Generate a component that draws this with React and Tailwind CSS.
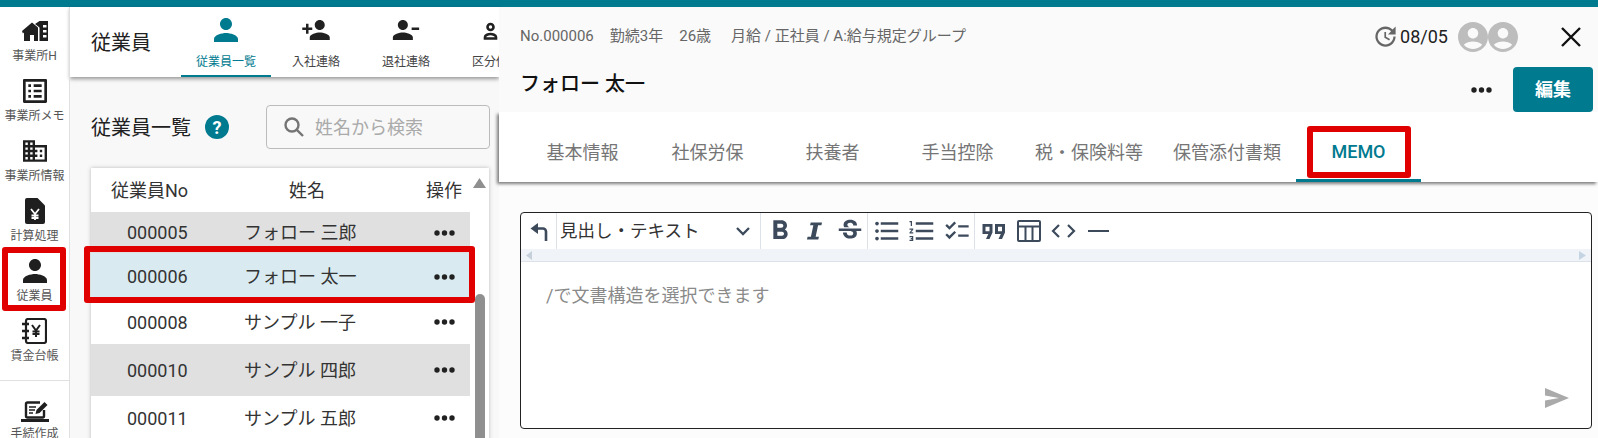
import React from 'react'

const PERSON = 'M12 12c2.21 0 4-1.79 4-4s-1.79-4-4-4-4 1.79-4 4 1.79 4 4 4zm0 2c-2.67 0-8 1.34-8 4v2h16v-2c0-2.66-5.33-4-8-4z'
const font = { fontFamily: 'Roboto, "Noto Sans CJK JP", sans-serif' }

const Mui = ({ d, size = 24, className = '', viewBox = '0 0 24 24', w, h }) => (
  <svg width={w || size} height={h || size} viewBox={viewBox} fill="currentColor" className={className}><path d={d} /></svg>
)

const HomeIcon = () => (
  <svg width="26" height="20" viewBox="0 0 26 20" fill="#1f1f1f">
    <path d="M0 10 10 1.500 16 6.600V20h-4v-6H8v6H2v-8.400L.9 12.400z" />
    <path fillRule="evenodd" d="M13 3 17.500 0H26v20h-8.500V6.500zM21 4v2.500h3.500V4zM21 9v2.500h3.500V9zM21 14v2.500h3.500V14z" />
  </svg>
)
const DocYen = () => (
  <svg width="20" height="26" viewBox="0 0 20 26">
    <path d="M2 0h10.500L20 7.500V24a2 2 0 0 1-2 2H2a2 2 0 0 1-2-2V2a2 2 0 0 1 2-2z" fill="#1f1f1f" />
    <path d="M6 11l4 5 4-5M10 16v6M6.500 17.500h7M6.500 20h7" fill="none" stroke="#fff" strokeWidth="1.800" />
  </svg>
)
const Ledger = () => (
  <svg width="25" height="26" viewBox="0 0 25 26" fill="none" stroke="#1f1f1f">
    <rect x="4" y="1" width="20" height="24" rx="2" strokeWidth="2.200" />
    <path d="M0 6h7M0 13h7M0 20h7" strokeWidth="2.400" />
    <path d="M10 7l4 5.500L18 7M14 12.500V19M10.500 13.500h7M10.500 16h7" strokeWidth="2" />
  </svg>
)
const Laptop = () => (
  <svg width="28" height="22" viewBox="0 0 28 22" fill="none" stroke="#1f1f1f">
    <path d="M23 10v6a1.500 1.500 0 0 1-1.500 1.500h-15A1.500 1.500 0 0 1 5 16V4a1.500 1.500 0 0 1 1.500-1.500H19" strokeWidth="2.400" />
    <path d="M8 7h7M8 10h6M8 13h4" strokeWidth="1.500" />
    <path d="M14.500 14l1-4 8-8 3 3-8 8z" fill="#1f1f1f" stroke="none" />
    <path d="M0 20.500h28" strokeWidth="3" />
  </svg>
)

const nav = [
  { label: '事業所H', icon: <HomeIcon /> },
  { label: '事業所メモ', icon: <Mui d="M19 5v14H5V5h14m1.100-2H3.900c-.5 0-.9.4-.9.9v16.200c0 .4.4.9.9.9h16.200c.4 0 .9-.5.9-.9V3.900c0-.5-.5-.9-.9-.9zM11 7h6v2h-6V7zm0 4h6v2h-6v-2zm0 4h6v2h-6zM7 7h2v2H7zm0 4h2v2H7zm0 4h2v2H7z" viewBox="3 3 18 18" className="text-[#1f1f1f]" /> },
  { label: '事業所情報', icon: <Mui d="M12 7V3H2v18h20V7H12zM6 19H4v-2h2v2zm0-4H4v-2h2v2zm0-4H4V9h2v2zm0-4H4V5h2v2zm4 12H8v-2h2v2zm0-4H8v-2h2v2zm0-4H8V9h2v2zm0-4H8V5h2v2zm10 12h-8v-2h2v-2h-2v-2h2v-2h-2V9h8v10zm-2-8h-2v2h2v-2zm0 4h-2v2h2v-2z" viewBox="2 3 20 18" w={24} h={22} className="text-[#1f1f1f]" /> },
  { label: '計算処理', icon: <DocYen /> },
  { label: '従業員', icon: <Mui d={PERSON} viewBox="4 4 16 16" className="text-[#1f1f1f]" /> },
  { label: '賃金台帳', icon: <Ledger /> },
]

const rows = [
  { no: '000005', name: 'フォロー 三郎', h: 'h-[41px]', bg: 'bg-[#e0e0e0]' },
  { no: '000006', name: 'フォロー 太一', h: 'h-[47px]', bg: 'bg-[#d9ebf0]' },
  { no: '000008', name: 'サンプル 一子', h: 'h-[44px]', bg: 'bg-white' },
  { no: '000010', name: 'サンプル 四郎', h: 'h-[52px]', bg: 'bg-[#e0e0e0]' },
  { no: '000011', name: 'サンプル 五郎', h: 'h-[44px]', bg: 'bg-white' },
]

const Dots = ({ className = '' }) => (
  <svg width="21" height="6" viewBox="0 0 21 6" fill="#212121" className={className}>
    <circle cx="3" cy="3" r="2.700" /><circle cx="10.500" cy="3" r="2.700" /><circle cx="18" cy="3" r="2.700" />
  </svg>
)

const Avatar = ({ className = '' }) => (
  <Mui size={30} viewBox="2 2 20 20" className={'text-[#bdbdbd] ' + className} d="M12 2C6.480 2 2 6.480 2 12s4.480 10 10 10 10-4.480 10-10S17.520 2 12 2zm0 4c1.930 0 3.500 1.570 3.500 3.500S13.930 13 12 13s-3.500-1.570-3.500-3.500S10.070 6 12 6zm0 14c-2.030 0-4.430-.82-6.140-2.880C7.550 15.800 9.680 15 12 15s4.450.8 6.140 2.120C16.430 19.180 14.030 20 12 20z" />
)

const Tool = ({ children }) => <div className="w-[35px] h-full flex items-center justify-center shrink-0">{children}</div>

export default function App() {
  return (
    <div style={font} className="w-[1598px] h-[438px] overflow-hidden flex flex-col bg-white text-[#212121]">
      <div className="h-[7px] bg-[#007a8f] shrink-0" />
      <div className="flex flex-1 min-h-0">
        {/* side nav */}
        <aside className="relative w-[70px] shrink-0 border-r border-[#e0e0e0] pt-[7px]">
          {nav.map(n => (
            <div key={n.label} className="h-[60px] flex flex-col items-center">
              <div className="mt-[5px] h-[24px] flex items-center justify-center">{n.icon}</div>
              <div className="mt-[5px] text-[12px] leading-4 text-[#555] whitespace-nowrap">{n.label}</div>
            </div>
          ))}
          <div className="mt-[6px] border-t border-[#e0e0e0]" />
          <div className="h-[60px] flex flex-col items-center">
            <div className="mt-[19px] h-[22px] flex items-center justify-center"><Laptop /></div>
            <div className="mt-[4px] text-[12px] leading-4 text-[#555] whitespace-nowrap">手続作成</div>
          </div>
          <div className="absolute left-[2px] top-[240px] w-[64px] h-[64px] border-[6px] border-[#e00000] rounded-[3px]" />
        </aside>

        {/* employee list */}
        <div className="w-[429px] shrink-0 bg-[#f8f8f8] flex flex-col">
          <header className="h-[70px] shrink-0 bg-white shadow-[0_2px_4px_rgba(0,0,0,0.4)] flex pl-[21px] overflow-hidden">
            <div className="w-[90px] shrink-0 pt-[24px] text-[20px] leading-6">従業員</div>
            <div className="w-[90px] shrink-0 h-full flex flex-col items-center pt-[11px] border-b-2 border-[#007a8f] text-[#007a8f]">
              <Mui d={PERSON} viewBox="4 4 16 16" />
              <div className="mt-[12px] text-[12px] leading-4">従業員一覧</div>
            </div>
            <div className="w-[90px] shrink-0 flex flex-col items-center pt-[11px]">
              <div className="h-6 flex items-center"><Mui w={28} h={20} viewBox="1 4 22 16" d="M15 12c2.210 0 4-1.790 4-4s-1.790-4-4-4-4 1.790-4 4 1.790 4 4 4zm-9-2V7H4v3H1v2h3v3h2v-3h3v-2H6zm9 4c-2.670 0-8 1.340-8 4v2h16v-2c0-2.660-5.330-4-8-4z" /></div>
              <div className="mt-[12px] text-[12px] leading-4 text-[#444]">入社連絡</div>
            </div>
            <div className="w-[90px] shrink-0 flex flex-col items-center pt-[11px]">
              <div className="h-6 flex items-center"><Mui w={28} h={20} viewBox="2 4 21 16" d="M14 8c0-2.210-1.790-4-4-4S6 5.790 6 8s1.790 4 4 4 4-1.790 4-4zm3 2v2h6v-2h-6zM2 18v2h16v-2c0-2.660-5.330-4-8-4s-8 1.340-8 4z" /></div>
              <div className="mt-[12px] text-[12px] leading-4 text-[#444]">退社連絡</div>
            </div>
            <div className="w-[90px] shrink-0 flex flex-col items-center pt-[11px]">
              <div className="h-6 flex items-center">
                <svg width="28" height="20" viewBox="0 0 28 20" fill="none" stroke="#212121" strokeWidth="2.600">
                  <circle cx="8.500" cy="7" r="3" /><path d="M3 18.500v-1.500c0-2 3.500-3 5.500-3s5.500 1 5.500 3v1.500zM17 4h9M17 9h9M17 14h9" />
                </svg>
              </div>
              <div className="mt-[12px] text-[12px] leading-4 text-[#444] whitespace-nowrap">区分他等</div>
            </div>
          </header>

          <div className="flex items-center pl-[21px] mt-[28px] h-[44px] shrink-0">
            <div className="text-[20px] w-[114px] pt-[2px]">従業員一覧</div>
            <div className="w-[24px] h-[24px] rounded-full bg-[#007a8f] text-white text-[18px] font-bold flex items-center justify-center">?</div>
            <div className="ml-[37px] w-[224px] h-[44px] border border-[#bbb] rounded-[4px] flex items-center pl-[16px]">
              <svg width="22" height="22" viewBox="0 0 22 22" fill="none" stroke="#757575" strokeWidth="2.400"><circle cx="9" cy="9" r="6.500" /><path d="M13.800 13.800 20 20" /></svg>
              <span className="ml-[10px] text-[18px] text-[#aaa]">姓名から検索</span>
            </div>
          </div>

          <div className="relative ml-[21px] mt-[19px] w-[398px] bg-white shadow-[0_0_4px_rgba(0,0,0,0.25)] flex shrink-0">
            <div className="w-[379px] shrink-0">
              <div className="h-[44px] flex items-center text-[18px] text-[#333]">
                <div className="w-[198px] pl-[20px]">従業員No</div>
                <div className="w-[137px]">姓名</div>
                <div>操作</div>
              </div>
              {rows.map(r => (
                <div key={r.no} className={'flex items-center text-[18px] text-[#333] ' + r.h + ' ' + r.bg}>
                  <div className="w-[153px] pl-[36px]">{r.no}</div>
                  <div className="w-[190px] whitespace-nowrap">{r.name}</div>
                  <Dots />
                </div>
              ))}
            </div>
            <div className="flex-1 flex flex-col items-center">
              <svg width="13" height="10" viewBox="0 0 13 10" fill="#8f8f8f" className="mt-[10px]"><path d="M6.500 0 13 10H0z" /></svg>
              <div className="mt-[106px] w-[10px] h-[200px] bg-[#8f8f8f] rounded-t-[5px]" />
            </div>
            <div className="absolute left-[-7px] top-[78px] w-[391px] h-[57px] border-[6px] border-[#e00000] rounded-[3px]" />
          </div>
        </div>

        {/* detail drawer */}
        <div className="relative flex-1 flex flex-col bg-[#fcfcfc]">
          <div className="relative z-20 h-[105px] shrink-0 bg-[#fafafa] pl-[21px]">
            <div className="h-[56px] flex items-center">
              <div className="flex gap-4 text-[15px] text-[#666] pt-[2px]">
                <span>No.000006</span>
                <span>勤続3年</span>
                <span>26歳</span>
                <span className="ml-[4px]">月給 / 正社員 / A:給与規定グループ</span>
              </div>
              <div className="ml-auto mt-[3px] flex items-center">
                <Mui size={27} className="text-[#666]" d="M21 10.120h-6.780l2.740-2.820c-2.730-2.700-7.150-2.800-9.880-.1-2.730 2.710-2.730 7.080 0 9.790s7.150 2.710 9.880 0C18.320 15.650 19 14.080 19 12.100h2c0 1.980-.88 4.550-2.640 6.290-3.510 3.480-9.210 3.480-12.720 0-3.500-3.470-3.530-9.110-.02-12.580s9.140-3.470 12.650 0L21 3v7.120zM12.500 8v4.250l3.500 2.080-.72 1.210L11 13V8h1.500z" />
                <span className="ml-[1px] text-[18px]">08/05</span>
                <Avatar className="ml-[10px]" />
                <Avatar />
                <svg width="20" height="20" viewBox="0 0 20 20" stroke="#111" strokeWidth="2.400" className="ml-[43px] mr-[17px]"><path d="M1 1l18 18M19 1 1 19" /></svg>
              </div>
            </div>
            <div className="h-[49px] flex items-end">
              <div className="mb-[14px] text-[20px] leading-7 font-medium text-[#111]">フォロー 太一</div>
              <Dots className="ml-auto mb-[19px]" />
              <button className="ml-[21px] mr-[5px] w-[80px] h-[45px] bg-[#007a8f] text-white rounded-[4px] text-[18px] font-bold">編集</button>
            </div>
          </div>

          <div className="relative z-10 h-[70px] shrink-0 bg-white shadow-[-2px_2px_3px_rgba(0,0,0,0.5)] pl-[21px] flex text-[18px] text-[#757575]">
            {['基本情報', '社保労保', '扶養者', '手当控除', '税・保険料等', '保管添付書類'].map(t => (
              <div key={t} className="min-w-[125px] px-[15px] flex items-center justify-center pt-[10px] whitespace-nowrap">{t}</div>
            ))}
            <div className="relative min-w-[125px] flex items-center justify-center pt-[12px] border-b-[3px] border-[#007a8f] text-[#007a8f] font-medium">
              MEMO
              <div className="absolute left-[11px] top-[14px] w-[104px] h-[52px] border-[6px] border-[#e00000] rounded-[3px]" />
            </div>
          </div>

          <div className="ml-[21px] mt-[30px] w-[1072px] h-[217px] bg-white border border-[#222] rounded-[4px] flex flex-col shrink-0">
            <div className="h-[36px] flex items-stretch text-[#3c4a5c] shrink-0">
              <div className="w-[36px] flex items-center justify-center border-r border-[#dde2e8]">
                <svg width="20" height="20" viewBox="0 0 20 20" fill="none" stroke="#3c4a5c" strokeWidth="2.600"><path d="M9 2v11L1.500 7.500z" fill="#3c4a5c" stroke="none" /><path d="M8 7.500h6a3 3 0 0 1 3 3V20" /></svg>
              </div>
              <div className="w-[204px] flex items-center justify-between pl-[3px] pr-[10px] border-r border-[#dde2e8] text-[17.500px] text-[#333]">
                見出し・テキスト
                <svg width="14" height="9" viewBox="0 0 14 9" fill="none" stroke="#3c4a5c" strokeWidth="2.300"><path d="M1 1l6 6 6-6" /></svg>
              </div>
              <div className="flex pl-[1px] border-r border-[#dde2e8]">
                <Tool><Mui size={32} d="M15.600 10.790c.97-.67 1.650-1.770 1.650-2.790 0-2.260-1.750-4-4-4H7v14h7.040c2.090 0 3.710-1.700 3.710-3.790 0-1.520-.86-2.820-2.150-3.420zM10 6.500h3c.83 0 1.500.67 1.500 1.500s-.67 1.500-1.500 1.500h-3v-3zm3.500 9H10v-3h3.500c.83 0 1.500.67 1.500 1.500s-.67 1.500-1.500 1.500z" /></Tool>
                <Tool><Mui w={17} h={18} viewBox="0 0 18 18" d="M5 0h12l-.7 3h-3.500L10.200 15h3.500l-.7 3H1l.7-3h3.500L7.800 3H4.300z" /></Tool>
                <Tool><Mui size={30} d="M6.850 7.080C6.850 4.370 9.450 3 12.240 3c1.640 0 3 .49 3.900 1.280.77.65 1.460 1.730 1.460 3.240h-3.010c0-.31-.05-.59-.15-.85-.29-.86-1.200-1.280-2.250-1.280-1.860 0-2.340.92-2.340 1.700 0 .48.25.88.74 1.210.38.25.77.48 1.410.7H7.390c-.21-.34-.54-.89-.54-1.920zM21 12v-2H3v2h9.620c1.150.45 1.960.75 1.960 1.970 0 1-.81 1.670-2.280 1.670-1.540 0-2.930-.54-2.930-2.510H6.400c0 .55.08 1.130.24 1.580.81 2.290 3.220 3.300 5.670 3.300 2.350 0 5.190-.98 5.190-4.050 0-.3-.01-1.160-.48-1.960H21z" /></Tool>
              </div>
              <div className="flex pl-[1px] border-r border-[#dde2e8]">
                <Tool><Mui size={30} d="M4 10.500c-.83 0-1.500.67-1.500 1.500s.67 1.500 1.500 1.500 1.500-.67 1.500-1.500-.67-1.500-1.500-1.500zm0-6c-.83 0-1.500.67-1.500 1.500S3.170 7.500 4 7.500 5.500 6.830 5.500 6 4.830 4.500 4 4.500zm0 12c-.83 0-1.500.68-1.500 1.500s.68 1.500 1.500 1.500 1.500-.68 1.500-1.500-.67-1.500-1.500-1.500zM7 19h14v-2H7v2zm0-6h14v-2H7v2zm0-8v2h14V5H7z" /></Tool>
                <Tool><Mui size={30} d="M2 17h2v.5H3v1h1v.5H2v1h3v-4H2v1zm1-9h1V4H2v1h1v3zm-1 3h1.800L2 13.100v.9h3v-1H3.200L5 10.900V10H2v1zm5-6v2h14V5H7zm0 14h14v-2H7v2zm0-6h14v-2H7v2z" /></Tool>
                <Tool><Mui size={28} d="M22 7h-9v2h9V7zm0 8h-9v2h9v-2zM5.540 11 2 7.460l1.410-1.410 2.120 2.120 4.240-4.240 1.410 1.410L5.540 11zm0 8L2 15.460l1.410-1.410 2.120 2.120 4.240-4.240 1.410 1.410L5.540 19z" /></Tool>
              </div>
              <div className="flex pl-[1px]">
                <Tool>
                  <svg width="24" height="15" viewBox="0 0 23 15" fill="#3c4a5c">
                    <path fillRule="evenodd" d="M0 0h10v8.500L7 15H3.500l2.300-5H0zM3 2.800v4.400h4V2.800z" />
                    <path fillRule="evenodd" d="M12.500 0h10v8.500L19.500 15H16l2.300-5h-5.800zM15.500 2.800v4.400h4V2.800z" />
                  </svg>
                </Tool>
                <Tool>
                  <svg width="24" height="22" viewBox="0 0 24 22" fill="none" stroke="#3c4a5c" strokeWidth="2"><rect x="1" y="1" width="22" height="20" rx="1" /><path d="M1 6.500h22M8.500 6.500V21M15.500 6.500V21" /></svg>
                </Tool>
                <Tool>
                  <svg width="25" height="14" viewBox="0 0 25 14" fill="none" stroke="#3c4a5c" strokeWidth="2.200"><path d="M8 1 2 7l6 6M17 1l6 6-6 6" /></svg>
                </Tool>
                <Tool><div className="w-[21px] h-[2px] bg-[#3c4a5c]" /></Tool>
              </div>
            </div>
            <div className="h-[13px] bg-[#f0f4f8] border-b border-[#dde2e8] flex items-center justify-between px-[5px] shrink-0">
              <svg width="6" height="9" viewBox="0 0 6 9" fill="#c5d0da"><path d="M6 0v9L0 4.500z" /></svg>
              <svg width="7" height="9" viewBox="0 0 7 9" fill="#c5d4e3"><path d="M0 0v9l7-4.500z" /></svg>
            </div>
            <div className="relative flex-1 pl-[25px] pt-[22px] text-[18px] leading-6 text-[#8a8a8a]">
              /で文書構造を選択できます
              <svg width="24" height="20" viewBox="0 0 24 20" fill="#aaa" className="absolute right-[22px] bottom-[20px]"><path d="M0 0 24 10 0 20v-7.500L14 10 0 7.500z" /></svg>
            </div>
          </div>
        </div>
      </div>
    </div>
  )
}
